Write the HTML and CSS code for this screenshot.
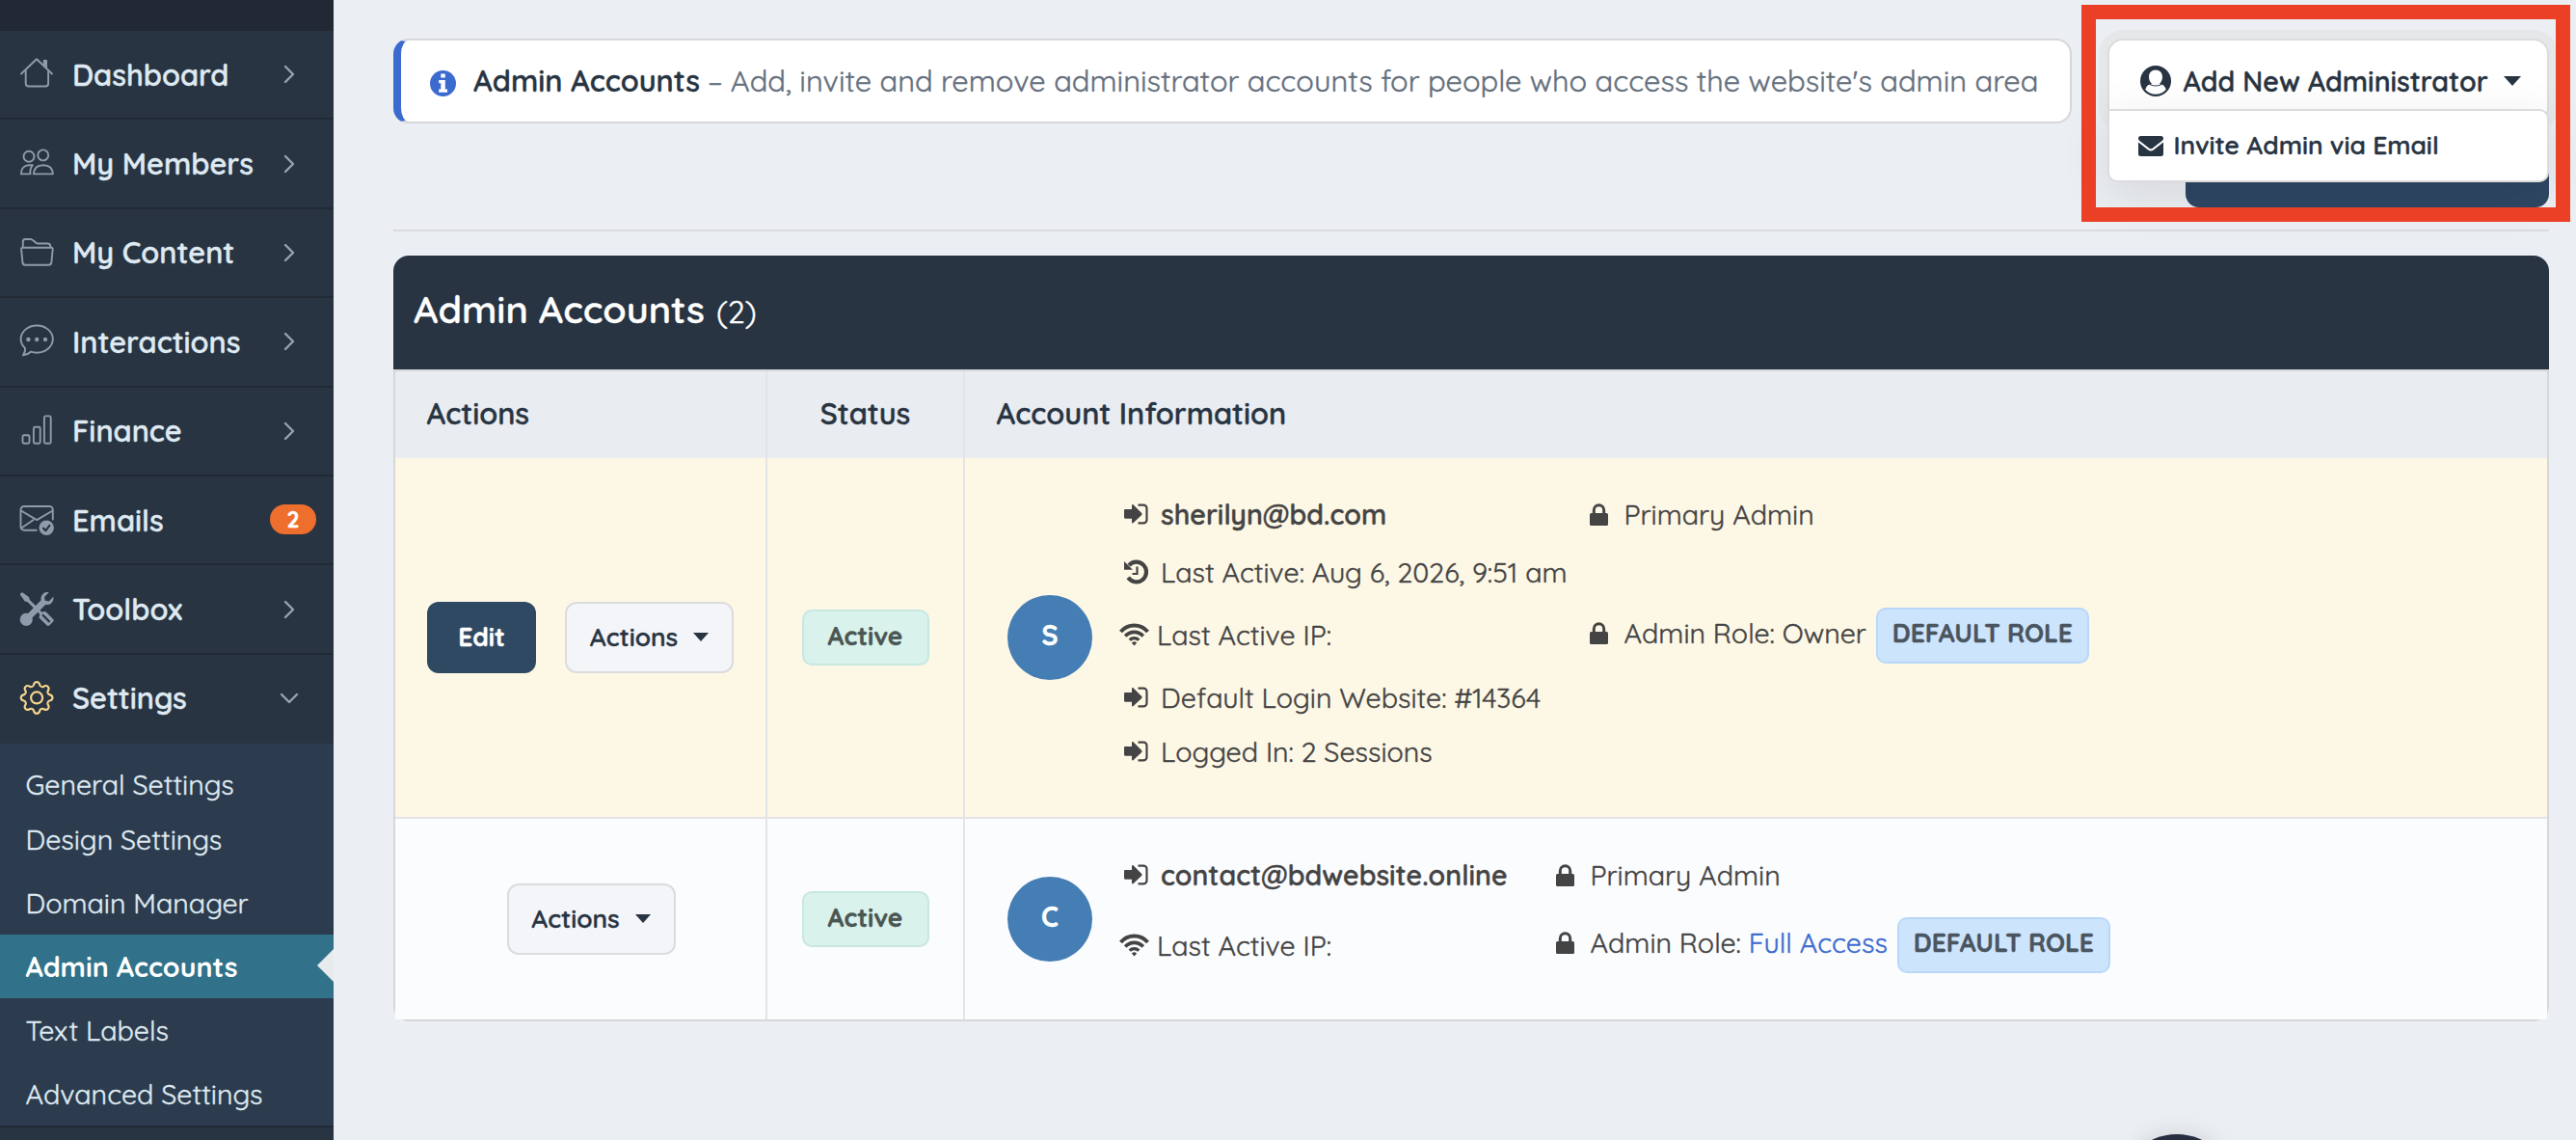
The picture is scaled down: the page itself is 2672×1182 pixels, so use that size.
FILE: index.html
```html
<!DOCTYPE html>
<html lang="en">
<head>
<meta charset="utf-8">
<title>Admin Accounts</title>
<link rel="stylesheet" href="styles.css">
</head>
<body>
<svg class="defs" width="0" height="0" aria-hidden="true">
  <symbol id="chev" viewBox="0 0 20 20"><path d="M6 2l8 8-8 8" fill="none" stroke="currentColor" stroke-width="2.4" stroke-linecap="round" stroke-linejoin="round"/></symbol>
  <symbol id="signin" viewBox="0 0 25 22"><path d="M1.200 6h6.800V2c0-1 1-1.300 1.700-.6l8.500 8.700c.6.600.6 1.200 0 1.800l-8.500 8.100c-.7.700-1.700.4-1.700-.6v-3.700H1.200c-.7 0-1.200-.5-1.200-1.200V7.200C0 6.500.5 6 1.200 6z" fill="currentColor"/><path d="M14.500 1.600h5.500a3.500 3.500 0 0 1 3.500 3.500v11.800a3.500 3.500 0 0 1-3.500 3.500h-5.500" fill="none" stroke="currentColor" stroke-width="2.200"/></symbol>
  <symbol id="history" viewBox="0 0 25 26"><path d="M5 6.200A10.300 10.300 0 1 1 4.200 18.800" fill="none" stroke="currentColor" stroke-width="4.200"/><path d="M0 2v8.800h9z" fill="currentColor"/><path d="M13.500 7.500v7.500H8.500" fill="none" stroke="currentColor" stroke-width="2.200"/></symbol>
  <symbol id="wifi" viewBox="0 0 31 24"><g fill="none" stroke="currentColor"><path stroke-width="4" d="M1.500 9a18.500 18.500 0 0 1 28 0"/><path stroke-width="3.600" d="M6.200 13.500a12.500 12.500 0 0 1 18.600 0"/><path stroke-width="3.200" d="M10.700 17.600a6.800 6.800 0 0 1 9.600 0"/></g><path d="M12.800 20.400a4 4 0 0 1 5.400 0l-2.700 3z" fill="currentColor"/></symbol>
  <symbol id="lock" viewBox="0 0 19 23"><rect y="10" width="19" height="13" rx="1.500" fill="currentColor"/><path d="M4.300 10.500V7a5.200 5.200 0 0 1 10.400 0v3.500" fill="none" stroke="currentColor" stroke-width="3"/></symbol>
</svg>
<div class="app">
  <nav class="sidebar">
    <div class="topstrip"></div>
    <a class="item"><svg class="ico" viewBox="0 0 36 36"><path d="M2 17.500L18 2.300l16 15.200M6.700 14v13.500a3 3 0 0 0 3 3h17.400a3 3 0 0 0 3-3V14"/><path class="fill" d="M24.800 3h4.200v9.500l-4.200-4z"/></svg><span>Dashboard</span><svg class="chev"><use href="#chev"/></svg></a>
    <a class="item"><svg class="ico" viewBox="0 0 36 36"><circle cx="10" cy="10.200" r="5.500"/><circle cx="24.700" cy="8.900" r="5.500"/><path d="M11.500 28.400H1.900c0-5.700 3.300-9.100 8.300-9.100h3.600c-2 2-2.800 5-2.300 9.100z"/><path d="M14.900 28.400c.3-5.700 3.900-9.100 10-9.100s9.700 3.400 10 9.100z"/></svg><span>My Members</span><svg class="chev"><use href="#chev"/></svg></a>
    <a class="item"><svg class="ico" viewBox="0 0 36 36"><path d="M3.800 12.500V6.500a2.500 2.500 0 0 1 2.500-2.500h5.500c3 0 4.500 4.500 7.500 4.500h10a3 3 0 0 1 3 3v1"/><path d="M3.600 12.700h29.600c1 0 1.600.7 1.500 1.600l-1.300 13.500a3.300 3.300 0 0 1-3.300 3H6.700a3.300 3.300 0 0 1-3.300-3L2.100 14.300c-.1-.9.500-1.600 1.500-1.600z"/></svg><span>My Content</span><svg class="chev"><use href="#chev"/></svg></a>
    <a class="item"><svg class="ico" viewBox="0 0 36 36"><path d="M4 32.300c1.700-2.500 2.400-5 2-7.300C3.200 22.500 1.600 19.200 1.600 15.600 1.600 7.800 9 1.500 18.200 1.500s16.600 6.300 16.600 14.100-7.400 14.100-16.600 14.100c-2.400 0-4.300-.4-6.200-1C9.800 30.800 7 32 4 32.300z"/><g class="fill"><circle cx="9.400" cy="16" r="2.200"/><circle cx="18.200" cy="16" r="2.200"/><circle cx="27" cy="16" r="2.200"/></g></svg><span>Interactions</span><svg class="chev"><use href="#chev"/></svg></a>
    <a class="item"><svg class="ico" viewBox="0 0 36 36"><rect x="3.500" y="22.200" width="7" height="8.600" rx="1.500"/><rect x="14.900" y="13.700" width="6.800" height="17.100" rx="1.500"/><rect x="25.900" y="2.400" width="6.800" height="28.400" rx="1.500"/></svg><span>Finance</span><svg class="chev"><use href="#chev"/></svg></a>
    <a class="item"><svg class="ico" viewBox="0 0 36 36"><path d="M17.800 28.700H5a3.500 3.500 0 0 1-3.500-3.500V7.500A3.500 3.500 0 0 1 5 4h26.300a3.500 3.500 0 0 1 3.500 3.500v10M1.800 8.500l16.400 9.600 16.400-9.600M2.200 26.500l12.200-8.300"/><circle class="fill" cx="28.200" cy="26.200" r="7.700"/><path class="cut" d="M25 26.700l2.400 2.400 4-5.300"/></svg><span>Emails</span><b class="count">2</b></a>
    <a class="item"><svg class="ico" viewBox="-.3 0 16.500 16.500"><path class="fill" d="M1 0 0 1l2.200 3.081a1 1 0 0 0 .815.419h.07a1 1 0 0 1 .708.293l2.675 2.675-2.617 2.654A3.003 3.003 0 0 0 0 13a3 3 0 1 0 5.878-.851l2.654-2.617.968.968-.305.914a1 1 0 0 0 .242 1.023l3.270 3.270a.997.997 0 0 0 1.414 0l1.586-1.586a.997.997 0 0 0 0-1.414l-3.270-3.270a1 1 0 0 0-1.023-.242L10.500 9.500l-.96-.96 2.680-2.643A3.005 3.005 0 0 0 16 3q0-.405-.102-.777l-2.140 2.141L12 4l-.364-1.757L13.777.102a3 3 0 0 0-3.675 3.680L7.462 6.460 4.793 3.793a1 1 0 0 1-.293-.707v-.071a1 1 0 0 0-.419-.814zm9.646 10.646a.5.5 0 0 1 .708 0l2.914 2.915a.5.5 0 0 1-.707.707l-2.915-2.914a.5.5 0 0 1 0-.708M3 11a2 2 0 1 0 0 4 2 2 0 0 0 0-4"/></svg><span>Toolbox</span><svg class="chev"><use href="#chev"/></svg></a>
    <a class="item open"><svg class="ico gold" viewBox="-.3 0 16.500 16.500"><path class="fill" d="M8 4.754a3.246 3.246 0 1 0 0 6.492 3.246 3.246 0 0 0 0-6.492zM5.754 8a2.246 2.246 0 1 1 4.492 0 2.246 2.246 0 0 1-4.492 0z"/><path class="fill" d="M9.796 1.343c-.527-1.790-3.065-1.790-3.592 0l-.094.319a.873.873 0 0 1-1.255.520l-.292-.160c-1.640-.892-3.433.902-2.540 2.541l.159.292a.873.873 0 0 1-.520 1.255l-.319.094c-1.790.527-1.790 3.065 0 3.592l.319.094a.873.873 0 0 1 .520 1.255l-.160.292c-.892 1.640.901 3.434 2.541 2.540l.292-.159a.873.873 0 0 1 1.255.520l.094.319c.527 1.790 3.065 1.790 3.592 0l.094-.319a.873.873 0 0 1 1.255-.520l.292.160c1.640.893 3.434-.902 2.540-2.541l-.159-.292a.873.873 0 0 1 .520-1.255l.319-.094c1.790-.527 1.790-3.065 0-3.592l-.319-.094a.873.873 0 0 1-.520-1.255l.160-.292c.893-1.640-.902-3.433-2.541-2.540l-.292.159a.873.873 0 0 1-1.255-.520l-.094-.319zm-2.633.283c.246-.835 1.428-.835 1.674 0l.094.319a1.873 1.873 0 0 0 2.693 1.115l.291-.160c.764-.415 1.600.420 1.184 1.185l-.159.292a1.873 1.873 0 0 0 1.116 2.692l.318.094c.835.246.835 1.428 0 1.674l-.319.094a1.873 1.873 0 0 0-1.115 2.693l.160.291c.415.764-.420 1.600-1.185 1.184l-.291-.159a1.873 1.873 0 0 0-2.693 1.116l-.094.318c-.246.835-1.428.835-1.674 0l-.094-.319a1.873 1.873 0 0 0-2.692-1.115l-.292.160c-.764.415-1.600-.420-1.184-1.185l.159-.291A1.873 1.873 0 0 0 1.945 8.930l-.319-.094c-.835-.246-.835-1.428 0-1.674l.319-.094A1.873 1.873 0 0 0 3.060 4.377l-.160-.292c-.415-.764.420-1.600 1.185-1.184l.292.159a1.873 1.873 0 0 0 2.692-1.115l.094-.319z"/></svg><span>Settings</span><svg class="chev down"><use href="#chev"/></svg></a>
    <div class="submenu">
      <a class="sub short"><span>General Settings</span></a>
      <a class="sub"><span>Design Settings</span></a>
      <a class="sub"><span>Domain Manager</span></a>
      <a class="sub active"><span>Admin Accounts</span></a>
      <a class="sub"><span>Text Labels</span></a>
      <a class="sub"><span>Advanced Settings</span></a>
    </div>
  </nav>

  <main class="main">
    <header class="head">
      <div class="notice">
        <svg class="info" viewBox="0 0 27 27"><circle cx="13.500" cy="13.500" r="13.500" fill="#3b6bcf"/><path d="M11.300 3.500h4.500v4h-4.500zM9.200 10h6.600v9.500h2.200v3.300H9.200v-3.300h2.100v-6.200H9.200z" fill="#fff"/></svg>
        <b class="subject">Admin Accounts</b><span class="dash">–</span><span>Add, invite and remove administrator accounts for people who access the website's admin area</span>
      </div>
      <div class="tools">
        <button class="add">
          <svg class="user" viewBox="0 0 32 32"><circle cx="16" cy="16" r="16" fill="currentColor"/><path d="M16 4.500c4.200 0 7 3 7 7.200 0 3-1.200 5.600-3 7 3.600.6 5.300 2.300 6.800 6A14.600 14.600 0 0 1 16 29.800 14.600 14.600 0 0 1 5.200 24.700c1.500-3.700 3.200-5.400 6.800-6-1.800-1.400-3-4-3-7 0-4.200 2.800-7.200 7-7.200z" fill="#fff"/><path d="M9.500 19.200c3.800 2.300 9.200 2.300 13 0" fill="none" stroke="currentColor" stroke-width="1.300"/></svg>
          <span>Add New Administrator</span><i class="caret big"></i>
        </button>
        <div class="menu">
          <svg class="mail" viewBox="0 0 26 21"><path d="M2.500 0h21A2.500 2.500 0 0 1 26 2.500c0 1-.6 1.900-1.400 2.600L14.700 12.700c-1 .8-2.400.8-3.400 0L1.400 5.100C.6 4.400 0 3.500 0 2.500A2.500 2.500 0 0 1 2.500 0z" fill="currentColor"/><path d="M0 6.500l10.200 7.900c1.700 1.300 3.900 1.300 5.600 0L26 6.500v12a2.500 2.500 0 0 1-2.500 2.500h-21A2.500 2.500 0 0 1 0 18.500z" fill="currentColor"/></svg>
          <span>Invite Admin via Email</span>
        </div>
        <div class="primary"></div>
        <div class="highlight"></div>
      </div>
    </header>

    <section class="panel">
      <h1 class="title"><span>Admin Accounts</span><small>(2)</small></h1>
      <div class="table">
        <div class="row thead">
          <div class="cell"><span>Actions</span></div><div class="cell mid"><span>Status</span></div><div class="cell"><span>Account Information</span></div>
        </div>
        <div class="row owner">
          <div class="cell mid"><button class="btn edit"><span>Edit</span></button><button class="btn"><span>Actions</span><i class="caret"></i></button></div>
          <div class="cell mid"><span class="status">Active</span></div>
          <div class="cell account">
            <div class="avatar">S</div>
            <div class="left">
              <p class="h60 in"><svg class="si"><use href="#signin"/></svg><b>sherilyn@bd.com</b></p>
              <p class="h61 in"><svg class="hi"><use href="#history"/></svg><span>Last Active: Aug 6, 2026, 9:51 am</span></p>
              <p class="h69"><svg class="wi"><use href="#wifi"/></svg><span>Last Active IP:</span></p>
              <p class="h60 in"><svg class="si"><use href="#signin"/></svg><span>Default Login Website: #14364</span></p>
              <p class="h53 in"><svg class="si"><use href="#signin"/></svg><span>Logged In: 2 Sessions</span></p>
            </div>
            <div class="right">
              <p class="h60"><svg class="lo"><use href="#lock"/></svg><span>Primary Admin</span></p>
              <p class="h64"><svg class="lo"><use href="#lock"/></svg><span>Admin Role: Owner</span><b class="role">DEFAULT ROLE</b></p>
            </div>
          </div>
        </div>
        <div class="row member">
          <div class="cell mid"><button class="btn"><span>Actions</span><i class="caret"></i></button></div>
          <div class="cell mid"><span class="status">Active</span></div>
          <div class="cell account">
            <div class="avatar">C</div>
            <div class="left">
              <p class="h60 in"><svg class="si"><use href="#signin"/></svg><b>contact@bdwebsite.online</b></p>
              <p class="h86"><svg class="wi"><use href="#wifi"/></svg><span>Last Active IP:</span></p>
            </div>
            <div class="right">
              <p class="h60"><svg class="lo"><use href="#lock"/></svg><span>Primary Admin</span></p>
              <p class="h80"><svg class="lo"><use href="#lock"/></svg><span>Admin Role: <a class="link">Full Access</a></span><b class="role">DEFAULT ROLE</b></p>
            </div>
          </div>
        </div>
      </div>
    </section>
  </main>
  <div class="bubble"></div>
</div>
</body>
</html>
```
FILE: styles.css
```css
* { box-sizing: border-box; }
body { margin: 0; background: #ebeef3; font-family: Quicksand, Lato, sans-serif; color: #444; overflow: hidden; -webkit-text-stroke: .4px currentColor; }
p, h1 { margin: 0; }
svg { display: block; flex: none; }
span, b { white-space: nowrap; }
b { font-weight: 600; }
button { font: inherit; color: inherit; }
.defs { position: absolute; }
.app { position: relative; display: flex; width: 2672px; height: 1182px; overflow: hidden; }

/* Sidebar */
.sidebar { width: 346px; flex: none; background: #283442; color: #dfe9f1; }
.topstrip { height: 32px; background: #222834; }
.item { display: flex; align-items: center; height: 92.4px; padding: 0 37px 0 20px; border-bottom: 2px solid #212934; font-size: 30.8px; font-weight: 600; }
.item.open { border-bottom: 0; padding-bottom: 2px; }
.item span { margin-left: 19px; }
.ico { width: 36px; height: 36px; fill: none; stroke: #8e9baa; stroke-width: 1.9; stroke-linejoin: round; stroke-linecap: round; color: #8e9baa; }
.ico .fill { fill: currentColor; stroke: none; }
.ico .cut { stroke: #283442; stroke-width: 2.2; }
.gold { color: #f8d58c; }
.chev { width: 20px; height: 20px; margin-left: auto; margin-right: -1px; color: #97a3b0; }
.chev.down { transform: rotate(90deg); }
.count { margin: 0 -19px 2px auto; width: 48px; height: 31px; border-radius: 16px; background: #ee6e2d; color: #fff; font-size: 23px; font-weight: 700; line-height: 31px; text-align: center; }
.submenu { padding-top: 9px; background: #2c3c4e; border-bottom: 2px solid #212934; }
.sub { display: block; position: relative; height: 66px; line-height: 67px; padding-left: 26.4px; font-size: 28.6px; }
.sub.short { height: 57px; }
.sub.active { background: #31728a; color: #fff; font-weight: 700; -webkit-text-stroke: 0; }
.sub.active::after { content: ""; position: absolute; right: 0; top: 15px; border: 17px solid transparent; border-right-color: #e8ebee; border-left: 0; }

/* Page header */
.main { width: 2326px; padding: 40px 28px 0 62px; }
.head { display: flex; justify-content: space-between; height: 200px; border-bottom: 2px solid #d9dadc; }
.notice { display: flex; align-items: center; width: 1741px; height: 88px; padding-left: 30px; border: 2px solid #d6d7d9; border-left: 8px solid #3b6bcf; border-radius: 16px; background: #fff; font-size: 30.8px; color: #65707e; }
.notice span, .notice b { padding-bottom: 2px; }
.info { width: 27px; height: 27px; margin-top: 4px; }
.subject { margin-left: 18px; color: #283442; }
.dash { margin: 0 8px; }
.tools { position: relative; width: 458px; }
.add { display: flex; align-items: center; width: 458px; height: 88px; padding: 0 0 1px 32px; border: 2px solid #dcdcdc; border-radius: 16px; background: #fff; box-shadow: 0 0 0 9px #e6e7e9; color: #283442; font-size: 28.6px; font-weight: 600; }
.user { width: 32px; height: 32px; }
.add span { margin-left: 12.5px; }
.caret { width: 0; border: 8px solid transparent; border-top: 9px solid #283442; border-bottom: 0; }
.caret.big { border-width: 10px 9px 0; margin-left: 16px; }
.menu { position: absolute; z-index: 2; left: 0; top: 73px; display: flex; align-items: center; width: 458px; height: 76px; padding-left: 30px; border: 2px solid #dcdcdc; border-radius: 0 10px 10px 10px; background: #fff; box-shadow: 0 12px 50px rgba(0, 0, 0, .1); color: #283442; font-size: 26.4px; font-weight: 600; }
.mail { width: 26px; height: 21px; }
.menu span { margin-left: 10.5px; padding-bottom: 1px; }
.primary { width: 377px; height: 75px; margin: 12px 0 0 auto; border-radius: 14px; background: #2e4763; }
.highlight { position: absolute; z-index: 3; left: -27px; top: -35px; width: 507px; height: 225px; border: 15px solid #eb4025; }

/* Accounts table */
.panel { margin-top: 25px; }
.title { height: 118px; padding: 0 0 0 21px; display: flex; align-items: baseline; border-radius: 16px 16px 0 0; background: #283442; color: #fff; font-size: 39.6px; line-height: 110px; font-weight: 600; }
.title small { margin-left: 12px; font-size: 32px; font-weight: 400; }
.table { border: 2px solid #d6d7d9; border-radius: 0 0 16px 16px; }
.row { display: grid; grid-template-columns: 386px 205px 1fr; }
.cell { display: flex; align-items: center; border-right: 2px solid #e3e4e6; }
.cell:last-child { border-right: 0; }
.mid { justify-content: center; }
.thead { height: 90px; background: #e9ecf1; color: #283442; font-size: 30.8px; font-weight: 600; }
.thead .cell { padding-left: 32.5px; padding-bottom: 4px; }
.thead .mid { padding-left: 0; }
.owner { height: 374px; background: #fdf7e5; border-bottom: 2px solid #e3e4e6; }
.member { height: 208px; background: #fbfcfe; }
.btn { display: flex; align-items: center; justify-content: center; width: 175px; height: 74px; padding: 0 0 2px; border: 2px solid #dcdcdc; border-radius: 12px; background: #f4f5f9; color: #283442; font-size: 26.4px; font-weight: 600; }
.btn .caret { margin-left: 16px; }
.btn.edit { width: 113px; margin-right: 30px; border: 0; background: #304963; color: #fff; font-weight: 700; }
.member .btn { margin-left: 22px; }
.status { width: 132px; height: 58px; padding-bottom: 3px; display: flex; align-items: center; justify-content: center; border: 2px solid #c8e7e0; border-radius: 10px; background: #d9f2ec; color: #4b5653; font-size: 26.4px; font-weight: 700; }
.avatar { width: 88px; height: 88px; flex: none; margin: 0 28px 0 44px; border-radius: 50%; background: #447eb5; color: #fff; font-size: 28.6px; font-weight: 700; line-height: 82px; text-align: center; }
.left, .right { align-self: flex-start; padding-top: 28px; font-size: 28.6px; }
.left { width: 488px; }
.member .left { width: 453px; }
.left p, .right p { display: flex; align-items: center; }
.h53 { height: 53px; }
.h60 { height: 60px; }
.h61 { height: 61px; }
.h64 { height: 64px; }
.h69 { height: 69px; }
.h80 { height: 80px; }
.h86 { height: 86px; }
.left .h61, .left .h69, .left .h53 { padding-bottom: 2px; }
.right .h64 { margin-top: 61px; }
.in { padding-left: 5px; }
.si { width: 25px; height: 22px; margin-right: 13px; }
.hi { width: 25px; height: 26px; margin-right: 13px; }
.wi { width: 31px; height: 24px; margin-right: 8px; }
.lo { width: 19px; height: 23px; margin-right: 16.5px; }
.link { color: #3b6bcf; -webkit-text-stroke-color: #3b6bcf; }
.role { display: flex; align-items: center; justify-content: center; width: 221px; height: 58px; margin: 5px 0 0 10px; padding-bottom: 4px; border: 2px solid #b9d7f8; border-radius: 10px; background: #cde4fd; color: #4a5560; font-size: 26.4px; font-weight: 700; }
.bubble { position: absolute; left: 2198px; top: 1176px; width: 120px; height: 120px; border-radius: 50%; background: #252f40; box-shadow: 0 2px 24px rgba(0, 0, 0, .15); }
```
